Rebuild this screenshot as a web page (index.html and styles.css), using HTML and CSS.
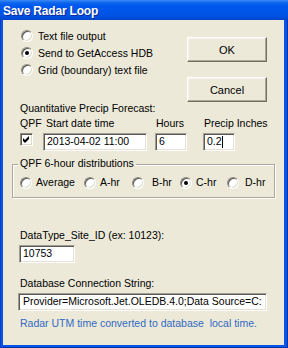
FILE: index.html
```html
<!DOCTYPE html>
<html>
<head>
<meta charset="utf-8">
<link rel="stylesheet" href="styles.css">
</head>
<body>
<div class="window">
  <div class="titlebar">Save Radar Loop</div>
  <div class="client">
    <div class="top">
      <div class="options">
        <div class="opt"><span class="radio"></span><span class="opt-text">Text file output</span></div>
        <div class="opt"><span class="radio on"></span><span class="opt-text">Send to GetAccess HDB</span></div>
        <div class="opt"><span class="radio"></span><span class="opt-text">Grid (boundary) text file</span></div>
      </div>
      <div class="buttons">
        <div class="btn">OK</div>
        <div class="btn">Cancel</div>
      </div>
    </div>
    <div class="label">Quantitative Precip Forecast:</div>
    <div class="qpf">
      <div class="h">QPF</div>
      <div class="h h-start">Start date time</div>
      <div class="h h-num">Hours</div>
      <div class="h h-num">Precip Inches</div>
      <div class="check"><svg width="11" height="11" viewBox="1 1 11 11"><polygon points="3,5 5,7 9,3 9,6 5,10 3,8" fill="#000"/></svg></div>
      <div class="edit edit-date">2013-04-02 11:00</div>
      <div class="edit edit-small">6</div>
      <div class="edit edit-small">0.2<span class="caret"></span></div>
    </div>
    <div class="group">
      <div class="group-title">QPF 6-hour distributions</div>
      <div class="dist">
        <div class="ditem w-avg"><span class="radio"></span><span class="dtext">Average</span></div>
        <div class="ditem w-48"><span class="radio"></span><span class="dtext">A-hr</span></div>
        <div class="ditem w-48"><span class="radio"></span><span class="dtext gap-wide">B-hr</span></div>
        <div class="ditem w-47"><span class="radio on"></span><span class="dtext">C-hr</span></div>
        <div class="ditem"><span class="radio"></span><span class="dtext gap-mid">D-hr</span></div>
      </div>
    </div>
    <div class="label label-site">DataType_Site_ID (ex: 10123):</div>
    <div class="edit edit-site">10753</div>
    <div class="label label-db">Database Connection String:</div>
    <div class="edit edit-db">Provider=Microsoft.Jet.OLEDB.4.0;Data Source=C:</div>
    <div class="label note">Radar UTM time converted to database&nbsp; local time.</div>
  </div>
</div>
</body>
</html>
```
FILE: styles.css
```css
html, body {
  margin: 0;
  padding: 0;
  background: #0555E8;
}

body {
  font-family: "Liberation Sans", Arial, sans-serif;
  font-size: 10.5px;
  color: #000;
}

.window {
  width: 288px;
  height: 348px;
  display: flex;
  flex-direction: column;
  background: #0555E8;
  box-shadow: inset 1px 0 0 #0842C0, inset -1px 0 0 #0033A8, inset 0 -1px 0 #0033A8;
}

.titlebar {
  height: 20px;
  box-sizing: border-box;
  padding: 3px 0 0 3px;
  line-height: 17px;
  font-size: 12px;
  font-weight: bold;
  letter-spacing: -0.2px;
  color: #fff;
  text-shadow: 1px 1px 0 #0A2A95;
  background: linear-gradient(#3A8CF9 0, #2A7CF3 1px, #0A64EC 3px, #0058EE 6px, #0056EA 12px, #0051E0 16px, #0049D4 19px, #0040C0 20px);
}

.client {
  flex: 1;
  margin: 0 4px 3px 3px;
  background: #ECE9D8;
  padding: 0 9px;
}

.top {
  display: flex;
  align-items: flex-start;
}

.options {
  padding-top: 7px;
  padding-left: 9px;
}

.opt {
  display: flex;
  align-items: center;
  height: 17px;
  white-space: nowrap;
}

.opt-text {
  margin-left: 5px;
}

.radio {
  position: relative;
  width: 12px;
  height: 12px;
  box-sizing: border-box;
  flex: none;
  border-radius: 50%;
  border: 1px solid;
  border-color: #8E8C80 #FFFFFF #FFFFFF #8E8C80;
  box-shadow: inset 1px 1px 0 #5A5850, inset -1px -1px 0 #DCD9C8;
  background: #fff;
}

.radio.on::after {
  content: "";
  position: absolute;
  left: 3px;
  top: 3px;
  width: 4px;
  height: 4px;
  border-radius: 50%;
  background: #000;
}

.buttons {
  margin-left: auto;
  margin-right: 8px;
  margin-top: 17px;
  display: flex;
  flex-direction: column;
  gap: 15px;
}

.btn {
  width: 80px;
  height: 25px;
  box-sizing: border-box;
  border: 1px solid;
  border-color: #FFFFFF #716F64 #716F64 #FFFFFF;
  box-shadow: inset -1px -1px 0 #ACA899, inset 1px 1px 0 #F6F4EC;
  background: #ECE9D8;
  display: flex;
  align-items: center;
  justify-content: center;
  font-size: 11px;
}

.label {
  margin-left: 8px;
  line-height: 13px;
  white-space: nowrap;
}

.qpf {
  margin-top: 2px;
  margin-left: 8px;
  display: grid;
  grid-template-columns: 23px 112px 48px 1fr;
  row-gap: 3px;
  align-items: start;
}

.h {
  line-height: 13px;
  white-space: nowrap;
}

.h-start {
  padding-left: 3px;
}

.h-num {
  padding-left: 1px;
}

.check {
  width: 13px;
  height: 13px;
  box-sizing: border-box;
  border: 1px solid;
  border-color: #8E8C80 #FFFFFF #FFFFFF #8E8C80;
  box-shadow: inset 1px 1px 0 #5A5850, inset -1px -1px 0 #DCD9C8;
  background: #fff;
}

.check svg {
  display: block;
}

.edit {
  height: 18px;
  box-sizing: border-box;
  border: 1px solid;
  border-color: #A09E94 #FFFFFF #FFFFFF #A09E94;
  box-shadow: inset 1px 1px 0 #5A5850, inset -1px -1px 0 #E4E1D4;
  background: #fff;
  padding: 0 2px 0 3px;
  line-height: 15px;
  white-space: nowrap;
  overflow: hidden;
}

.edit-date {
  width: 104px;
}

.edit-small {
  width: 32px;
}

.caret {
  display: inline-block;
  width: 1px;
  height: 12px;
  background: #000;
  vertical-align: -3px;
}

.group {
  margin-top: 13px;
  border: 1px solid #ACA899;
  box-shadow: 1px 1px 0 #fff, inset 1px 1px 0 #fff;
  padding: 0 0 8px 0;
}

.group-title {
  width: fit-content;
  margin-top: -8px;
  margin-left: 5px;
  padding: 0 2px;
  line-height: 13px;
  background: #ECE9D8;
  white-space: nowrap;
}

.dist {
  margin-top: 6px;
  padding-left: 7px;
  display: flex;
  height: 13px;
}

.ditem {
  display: flex;
  align-items: center;
  white-space: nowrap;
}

.w-avg {
  width: 64px;
}

.w-48 {
  width: 48px;
}

.w-47 {
  width: 47px;
}

.dtext {
  margin-left: 4px;
  line-height: 13px;
}

.dtext.gap-wide {
  margin-left: 8px;
}

.dtext.gap-mid {
  margin-left: 6px;
}

.label-site {
  margin-top: 31px;
}

.edit-site {
  margin-top: 3px;
  margin-left: 7px;
  width: 56px;
}

.label-db {
  margin-top: 14px;
}

.edit-db {
  margin-top: 3px;
  margin-left: 6px;
  width: 249px;
  padding-left: 4px;
}

.note {
  margin-top: 6px;
  color: #316AC5;
}
```
